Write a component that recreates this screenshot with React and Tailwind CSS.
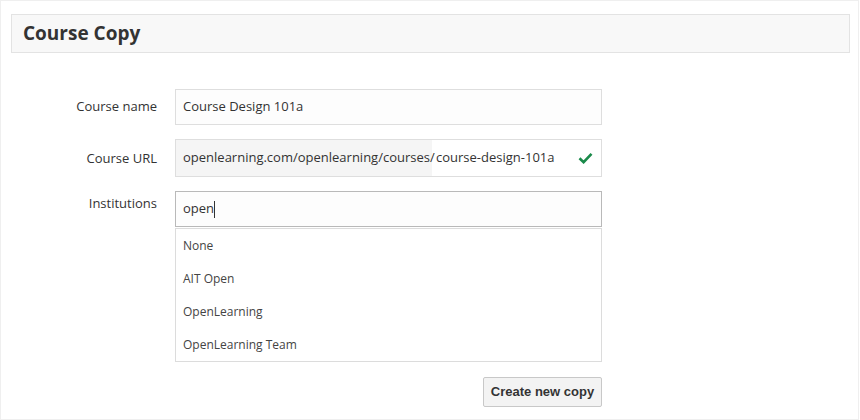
import React from "react";

const font = { fontFamily: '"Open Sans", "Noto Sans", sans-serif' };

function Label({ children, pt }) {
  return (
    <div className={`w-[146px] shrink-0 text-right text-[13px] text-[#333] leading-[18px] ${pt}`}>
      {children}
    </div>
  );
}

export default function App() {
  const items = ["None", "AIT Open", "OpenLearning", "OpenLearning Team"];
  return (
    <div style={font} className="w-[860px] h-[420px] bg-white">
      <div className="w-[859px] h-[420px] border border-[#efefef] pt-[13px] pl-[10px] flex flex-col">
        <div className="w-[839px] h-[39px] border border-[#e3e3e3] bg-[#f8f8f8] flex items-center pl-[11px]">
          <h1 className="text-[19px] font-bold text-[#333] leading-none">Course Copy</h1>
        </div>

        <div className="mt-[36px] flex items-start gap-[18px]">
          <Label pt="pt-[8px]">Course name</Label>
          <div className="w-[427px] h-[36px] border border-[#dedede] bg-[#fdfdfd] flex items-center px-[7px] text-[13px] text-[#333]">
            Course Design 101a
          </div>
        </div>

        <div className="mt-[14px] flex items-start gap-[18px]">
          <Label pt="pt-[10px]">Course URL</Label>
          <div className="w-[427px] h-[38px] border border-[#dedede] bg-white flex items-stretch text-[13px] text-[#333]">
            <div className="w-[256px] bg-[#f5f5f5] flex items-center pl-[7px]">
              openlearning.com/openlearning/courses/
            </div>
            <div className="flex-1 flex items-center pl-[4px] pr-[8px] justify-between">
              <span>course-design-101a</span>
              <svg width="15" height="12" viewBox="0 0 15 12">
                <path d="M1.5 6.2 L5.6 10.2 L13.5 1.8" fill="none" stroke="#1a8a4a" strokeWidth="2.6" />
              </svg>
            </div>
          </div>
        </div>

        <div className="mt-[14px] flex items-start gap-[18px]">
          <Label pt="pt-[3px]">Institutions</Label>
          <div className="flex flex-col">
            <div className="w-[427px] h-[36px] border border-[#b9b9b9] bg-[#fdfdfd] flex items-center px-[7px] text-[13px] text-[#333]">
              <span>open</span>
              <span className="inline-block w-[1px] h-[17px] bg-[#333]" />
            </div>
            <div className="w-[427px] mt-[1px] border border-[#dcdcdc] bg-white flex flex-col py-0">
              {items.map((t) => (
                <div key={t} className="h-[33px] flex items-center pl-[7px] text-[12px] text-[#444]">
                  {t}
                </div>
              ))}
            </div>
            <div className="flex justify-end mt-[15px]">
              <button
                style={{ fontFamily: '"Liberation Sans", Arial, sans-serif' }}
                className="w-[119px] h-[30px] border border-[#c8c8c8] bg-[#f3f3f3] rounded-[2px] text-[13px] font-bold text-[#333]"
              >
                Create new copy
              </button>
            </div>
          </div>
        </div>
      </div>
    </div>
  );
}
